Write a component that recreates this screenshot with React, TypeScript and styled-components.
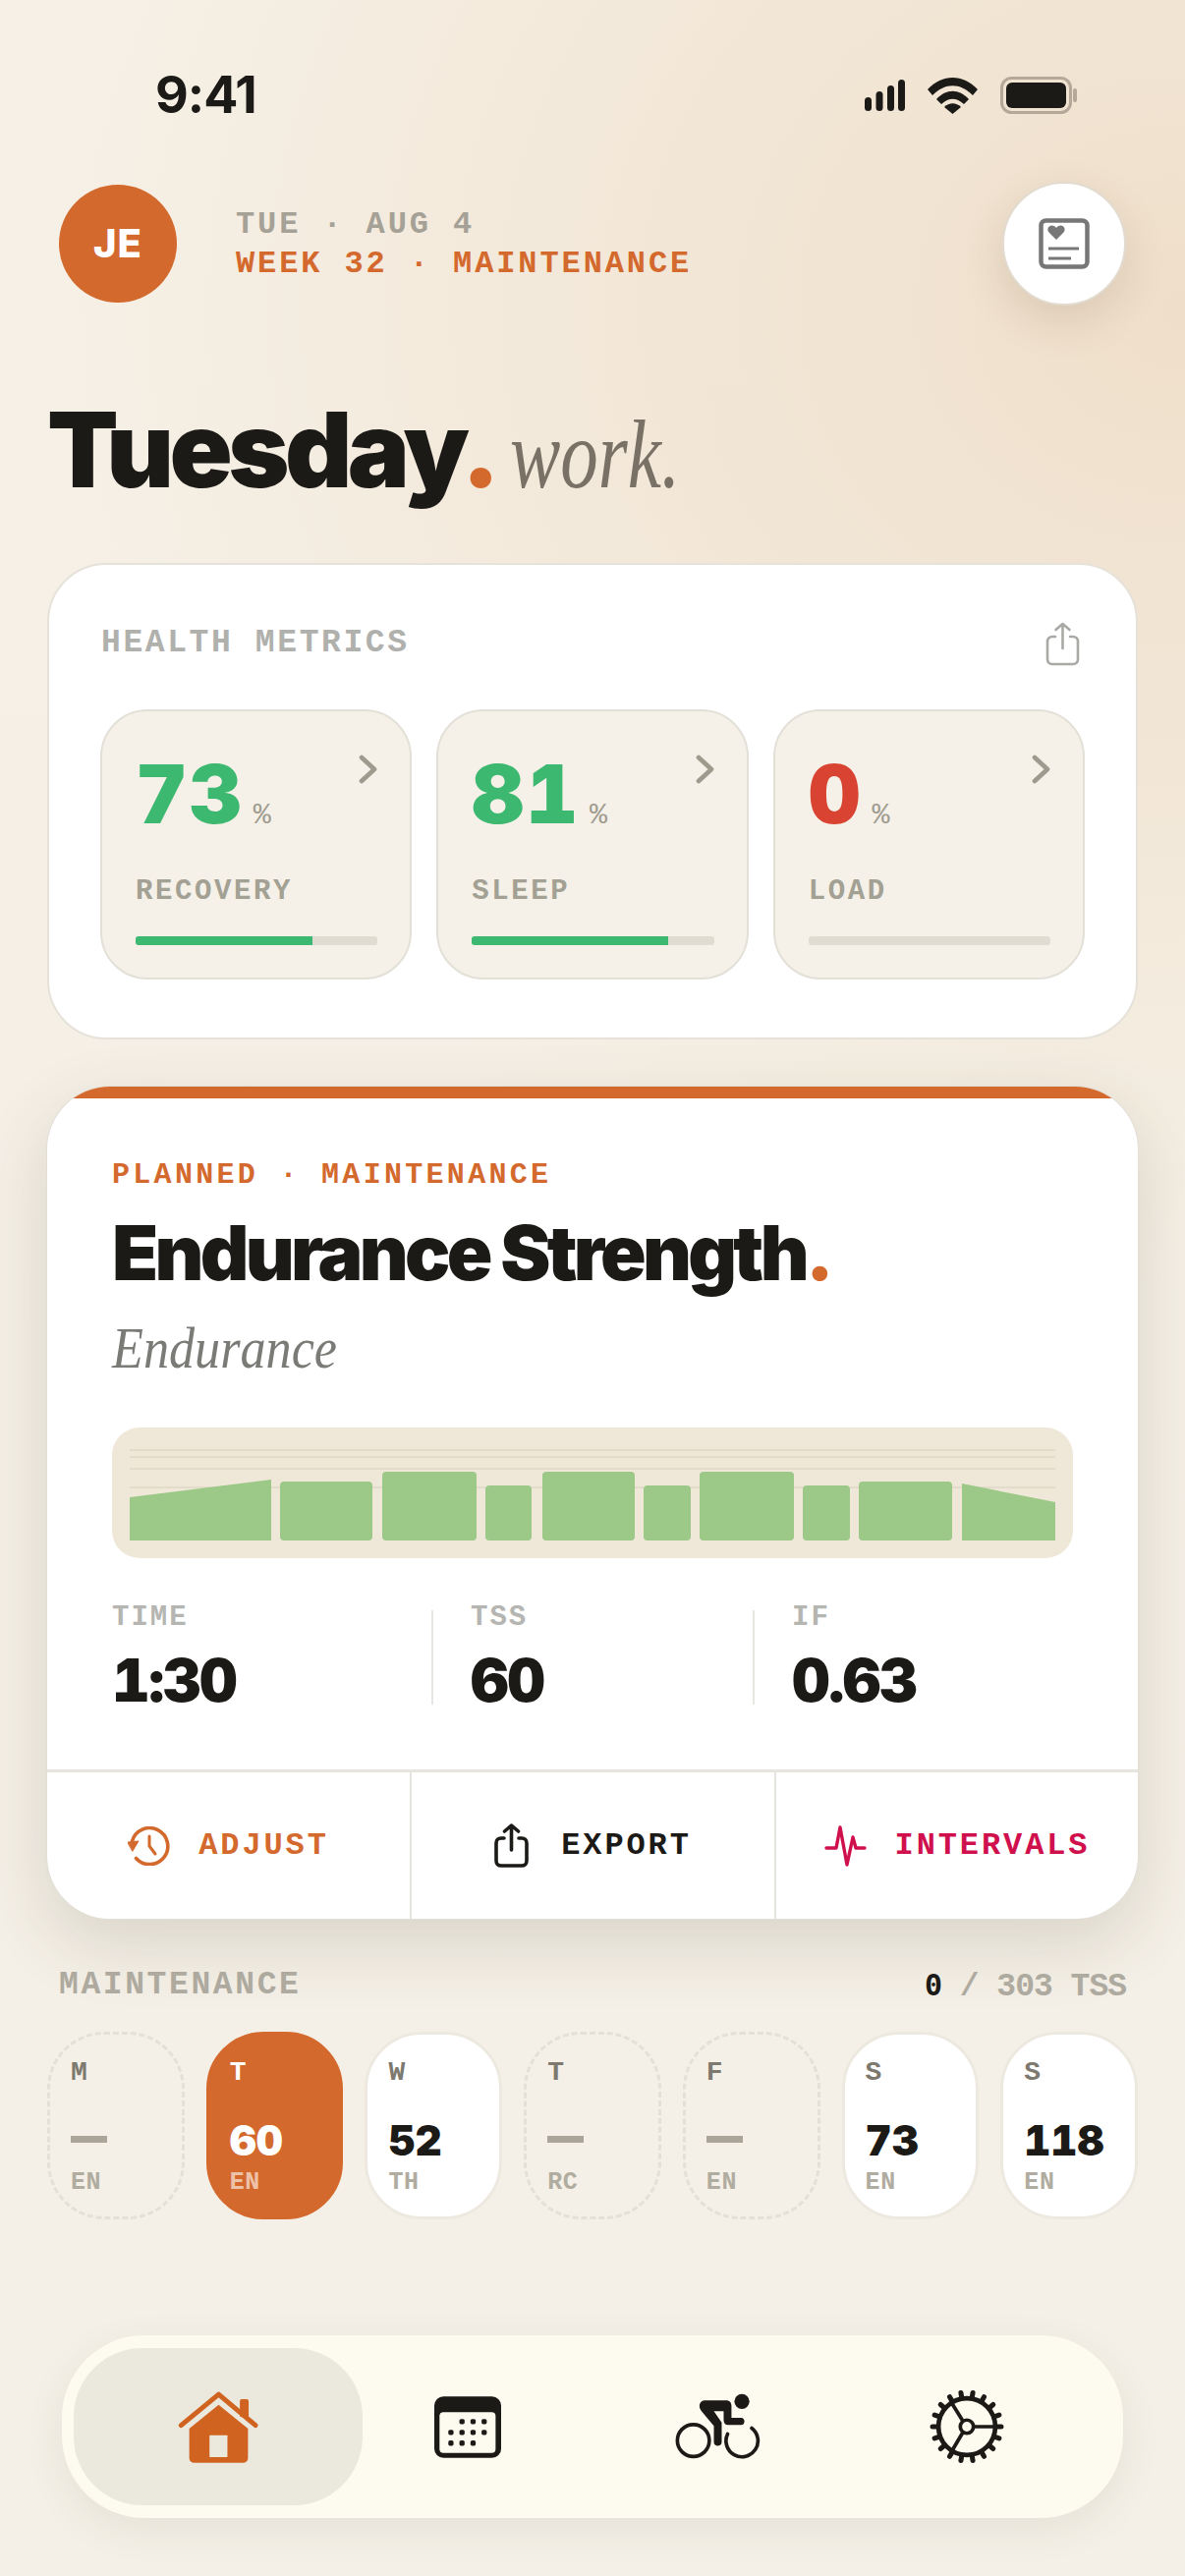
import styled, { createGlobalStyle } from "styled-components";

const ink = "#1c1a17";
const rust = "#d4692d";
const stone = "#a5a196";
const mono = `"Liberation Mono", monospace`;
const sans = `Inter, "Liberation Sans", sans-serif`;
const serif = `"Liberation Serif", serif`;

const Global = createGlobalStyle`
  html, body { margin: 0; padding: 0; }
  * { box-sizing: border-box; }
`;

const Shell = styled.div`
  width: 1206px;
  height: 2622px;
  overflow: hidden;
  background:
    radial-gradient(ellipse 1150px 1000px at 100% 12%, #efdfca 0%, rgba(239, 223, 202, 0) 100%),
    linear-gradient(180deg, #f6f0e6 0%, #f4f0e7 100%);
`;

const StatusBar = styled.div`
  height: 184px;
  padding: 68px 110px 0 158px;
  display: flex;
  justify-content: space-between;
  align-items: flex-start;
`;

const Clock = styled.div`
  font: 700 52px/58px ${sans};
  letter-spacing: -1px;
  color: ${ink};
`;

const StatusIcons = styled.div`
  display: flex;
  align-items: center;
  gap: 23px;
  height: 58px;
`;

const Header = styled.header`
  height: 127px;
  padding: 0 60px;
  display: flex;
  align-items: center;
`;

const Avatar = styled.div`
  width: 120px;
  height: 120px;
  border-radius: 50%;
  background: ${rust};
  color: #fff;
  display: flex;
  align-items: center;
  justify-content: center;
  font: 800 40px/1 ${sans};
  letter-spacing: 1px;
`;

const HeaderText = styled.div`
  margin-left: 60px;
  padding-top: 3px;
  flex: 1;
`;

const HeaderLine = styled.div<{ $accent?: boolean }>`
  font: 700 32px/40px ${mono};
  letter-spacing: 2.9px;
  white-space: pre;
  color: ${(p) => (p.$accent ? rust : stone)};
`;

const RoundButton = styled.div`
  width: 126px;
  height: 126px;
  border-radius: 50%;
  background: #fff;
  border: 2px solid #e2dbd0;
  box-shadow: 0 16px 44px rgba(90, 60, 30, 0.14);
  display: flex;
  align-items: center;
  justify-content: center;
`;

const Main = styled.main`
  padding: 0 48px;
`;

const Title = styled.h1`
  margin: 87px 0 55px;
  height: 120px;
  font: 900 106px/120px ${sans};
  letter-spacing: -4.6px;
  color: ${ink};
  white-space: nowrap;
`;

const Dot = styled.span`
  color: ${rust};
`;

const TitleNote = styled.em`
  display: inline-block;
  margin-left: 14px;
  font: italic 400 100px/120px ${serif};
  letter-spacing: 0;
  color: #7a7166;
  transform: scaleX(0.77);
  transform-origin: left center;
`;

const HealthCard = styled.section`
  height: 485px;
  background: #fff;
  border: 2px solid #e6e2da;
  border-radius: 60px;
  padding: 50px 52px 0 52px;
`;

const CardHead = styled.div`
  height: 60px;
  margin-bottom: 37px;
  display: flex;
  align-items: center;
  justify-content: space-between;
  padding-right: 5px;
`;

const CardHeading = styled.div`
  font: 700 33px/40px ${mono};
  letter-spacing: 2.6px;
  padding-left: 1px;
  color: #b0b0ad;
`;

const MetricGrid = styled.div`
  display: grid;
  grid-template-columns: repeat(3, 1fr);
  gap: 25px;
`;

const MetricTile = styled.div`
  height: 275px;
  background: #f5f1e8;
  border: 2px solid #e3e0d8;
  border-radius: 48px;
  padding: 44px 33px 0 34px;
`;

const MetricTop = styled.div`
  display: flex;
  justify-content: space-between;
  align-items: flex-start;
`;

const MetricValue = styled.div<{ $color: string }>`
  font: 900 82px/82px ${sans};
  font-variant-numeric: tabular-nums;
  letter-spacing: 2px;
  color: ${(p) => p.$color};
`;

const Percent = styled.span`
  margin-left: 10px;
  font: 400 30px/1 ${mono};
  letter-spacing: 0;
  color: #a09c90;
`;

const MetricLabel = styled.div`
  margin-top: 43px;
  font: 700 29px/30px ${mono};
  letter-spacing: 2.6px;
  color: #a3a094;
`;

const Track = styled.div`
  margin-top: 30px;
  height: 9px;
  border-radius: 3px;
  background: #e0dcd2;
  overflow: hidden;
`;

const TrackFill = styled.div`
  height: 100%;
  background: #3db870;
`;

const WorkoutCard = styled.section`
  margin-top: 48px;
  height: 847px;
  background: #fff;
  border-radius: 64px;
  overflow: hidden;
  box-shadow: 0 0 0 1px #e2dfd7, 0 24px 70px rgba(70, 60, 40, 0.16);
`;

const AccentBar = styled.div`
  height: 12px;
  background: ${rust};
`;

const WorkoutBody = styled.div`
  height: 683px;
  padding: 63px 66px 0;
`;

const Eyebrow = styled.div`
  font: 700 30px/30px ${mono};
  letter-spacing: 3.3px;
  white-space: pre;
  color: ${rust};
`;

const WorkoutTitle = styled.h2`
  margin: 26px 0 0;
  font: 900 77px/77px ${sans};
  letter-spacing: -3.75px;
  color: ${ink};
`;

const WorkoutType = styled.div`
  margin-top: 22px;
  font: italic 400 60px/72px ${serif};
  color: #7a7a76;
  transform: scaleX(0.87);
  transform-origin: left center;
`;

const Profile = styled.div`
  margin-top: 45px;
  height: 133px;
  border-radius: 28px;
  background: #efe8d8;
  padding: 22px 18px 18px;
`;

const Stats = styled.div`
  margin-top: 47px;
  display: flex;
  align-items: center;
`;

const Stat = styled.div<{ $width?: number; $inset?: boolean }>`
  width: ${(p) => (p.$width ? `${p.$width}px` : "auto")};
  padding-left: ${(p) => (p.$inset ? "38px" : "0")};
`;

const StatLabel = styled.div`
  font: 700 29px/28px ${mono};
  letter-spacing: 2px;
  color: #b5b5b2;
`;

const StatValue = styled.div`
  margin-top: 19px;
  font: 900 60px/60px ${sans};
  font-variant-numeric: tabular-nums;
  letter-spacing: -1.5px;
  color: ${ink};
`;

const StatDivider = styled.div`
  width: 2px;
  height: 96px;
  background: #e8e6e1;
`;

const Actions = styled.div`
  height: 152px;
  border-top: 3px solid #e8e5df;
  display: grid;
  grid-template-columns: 369px 371px 1fr;
`;

const Action = styled.div<{ $color: string; $gap: number; $divided?: boolean }>`
  display: flex;
  align-items: center;
  justify-content: center;
  gap: ${(p) => p.$gap}px;
  border-left: ${(p) => (p.$divided ? "2px solid #e6e4df" : "none")};
  font: 700 32px/1 ${mono};
  letter-spacing: 2.9px;
  color: ${(p) => p.$color};
`;

const WeekHead = styled.div`
  margin-top: 53px;
  height: 30px;
  padding: 0 12px;
  display: flex;
  justify-content: space-between;
  font: 700 33px/30px ${mono};
  color: #aeaa9f;
`;

const WeekTitle = styled.span`
  letter-spacing: 2.6px;
`;

const WeekTotal = styled.span`
  white-space: pre;
  letter-spacing: -1px;
`;

const WeekDone = styled.span`
  font-family: "DejaVu Sans Mono", monospace;
  font-weight: 700;
  font-size: 30px;
  color: ${ink};
`;

const WeekGrid = styled.div`
  margin-top: 32px;
  display: grid;
  grid-template-columns: repeat(7, 1fr);
  gap: 22px;
`;

const DayTile = styled.div<{ $kind: "rest" | "today" | "done" }>`
  height: 191px;
  padding: 27px 0 0 21px;
  border-radius: 58px;
  background: ${(p) => (p.$kind === "today" ? rust : p.$kind === "done" ? "#fff" : "transparent")};
  border: 3px ${(p) => (p.$kind === "rest" ? "dashed #e4e0d6" : p.$kind === "done" ? "solid #ede9e0" : `solid ${rust}`)};
`;

const DayLetter = styled.div<{ $today?: boolean }>`
  font: 700 28px/24px ${mono};
  color: ${(p) => (p.$today ? "#fff" : "#7d796f")};
`;

const DayValue = styled.div<{ $today?: boolean }>`
  margin-top: 36px;
  height: 42px;
  font: 900 42px/42px ${sans};
  font-variant-numeric: tabular-nums;
  letter-spacing: 0;
  color: ${(p) => (p.$today ? "#fff" : ink)};
  display: flex;
  align-items: center;
`;

const DayDash = styled.div`
  width: 37px;
  height: 7px;
  margin-top: -3px;
  background: #aaa598;
`;

const DayType = styled.div<{ $today?: boolean }>`
  margin-top: 10px;
  font: 700 25px/24px ${mono};
  letter-spacing: 0.6px;
  color: ${(p) => (p.$today ? "rgba(255,255,255,0.62)" : "#b0aca0")};
`;

const TabBar = styled.nav`
  margin: 118px 15px 0;
  height: 186px;
  border-radius: 84px;
  background: #fdfbef;
  box-shadow: 0 12px 40px rgba(70, 60, 40, 0.08);
  padding: 13px 12px;
  display: flex;
  align-items: center;
`;

const ActiveTab = styled.div`
  flex: none;
  width: 294px;
  height: 160px;
  border-radius: 70px;
  background: #ebe8dd;
  margin-right: 17px;
  display: flex;
  align-items: center;
  justify-content: center;
`;

const Tab = styled.div`
  flex: none;
  width: 180px;
  display: flex;
  align-items: center;
  justify-content: center;

  & + & {
    margin-left: 74px;
  }
`;

const Signal = () => (
  <svg width="41" height="32" viewBox="0 0 41 32" fill={ink}>
    <rect x="0" y="18" width="7" height="14" rx="3.5" />
    <rect x="11.5" y="12" width="7" height="20" rx="3.5" />
    <rect x="23" y="6" width="7" height="26" rx="3.5" />
    <rect x="34" y="0" width="7" height="32" rx="3.5" />
  </svg>
);

const Wifi = () => (
  <svg width="51" height="38" viewBox="0 0 51 38" fill={ink}>
    <path d="M0 13 C15 -3 36 -3 51 13 L46 19 C33 6 18 6 5 19 Z" />
    <path d="M9 23 C19 12 32 12 42 23 L37 28 C29 21 22 21 14 28 Z" />
    <path d="M17 31 C22 26 29 26 34 31 L25.5 38 Z" />
  </svg>
);

const Battery = () => (
  <svg width="78" height="38" viewBox="0 0 78 38">
    <rect x="1.5" y="1.5" width="70" height="35" rx="10" fill="none" stroke="#b5a899" strokeWidth="3" />
    <rect x="6" y="6" width="61" height="26" rx="6" fill={ink} />
    <rect x="74" y="12" width="4" height="14" rx="2" fill="#b5a899" />
  </svg>
);

const HealthRecord = () => (
  <svg width="52" height="52" viewBox="0 0 52 52" fill="none" stroke="#777" strokeWidth="4.5">
    <rect x="2.5" y="2.5" width="47" height="47" rx="5" />
    <path d="M10 31 H41 M10 41 H33" strokeWidth="3" />
    <path
      d="M18 22 L10.5 14.5 C8 11.5 10 7.5 13.5 7.5 C15.5 7.5 17 8.5 18 10 C19 8.5 20.5 7.5 22.5 7.5 C26 7.5 28 11.5 25.5 14.5 Z"
      fill="#777"
      stroke="none"
    />
  </svg>
);

const ShareIcon = ({ color, sw }: { color: string; sw: number }) => (
  <svg width="35" height="45" viewBox="0 0 35 45" fill="none" stroke={color} strokeWidth={sw} strokeLinecap="round" strokeLinejoin="round">
    <path d="M10 15 H7 C4 15 2 17 2 20 V38 C2 41 4 43 7 43 H28 C31 43 33 41 33 38 V20 C33 17 31 15 28 15 H25" />
    <path d="M17.5 27 V2 M10.5 8 L17.500 2 L24.500 8" />
  </svg>
);

const Chevron = () => (
  <svg width="19" height="30" viewBox="0 0 19 30" fill="none" stroke="#9e9a8e" strokeWidth="4.7" strokeLinecap="round" strokeLinejoin="round">
    <path d="M3 3 L16 15 L3 27" />
  </svg>
);

const HistoryIcon = () => (
  <svg width="44" height="40" viewBox="0 0 44 40" fill="none" stroke={rust} strokeWidth="3.6" strokeLinecap="round" strokeLinejoin="round">
    <path d="M4.5 15 A18.500 18.500 0 1 1 8.500 32.500" />
    <path d="M0 16 L11 15 L5 25 Z" fill={rust} strokeWidth="1" />
    <path d="M22 10 V20 L28 28" strokeWidth="3" />
  </svg>
);

const PulseIcon = () => (
  <svg width="43" height="44" viewBox="-2 -2 43 44" fill="none" stroke="#d0104c" strokeWidth="3.4" strokeLinecap="round" strokeLinejoin="round">
    <path d="M0 22 H10 L14 1 L21 39 L27 11 L30 22 H39" />
  </svg>
);

const WorkoutProfile = () => (
  <svg width="942" height="93" viewBox="0 0 942 93" style={{ display: "block" }}>
    <g fill="#e3dccb">
      <rect x="0" y="0" width="942" height="2" />
      <rect x="0" y="7" width="942" height="2" />
      <rect x="0" y="19" width="942" height="2" />
      <rect x="0" y="38" width="942" height="2" />
    </g>
    <g fill="#9cc888">
      <path d="M0 49 L144 31 V93 H0 Z" />
      <rect x="153" y="33" width="94" height="60" rx="4" />
      <rect x="257" y="23" width="96" height="70" rx="4" />
      <rect x="362" y="37" width="47" height="56" rx="4" />
      <rect x="420" y="23" width="94" height="70" rx="4" />
      <rect x="523" y="37" width="48" height="56" rx="4" />
      <rect x="580" y="23" width="96" height="70" rx="4" />
      <rect x="685" y="37" width="48" height="56" rx="4" />
      <rect x="742" y="33" width="95" height="60" rx="4" />
      <path d="M847 35 L942 54 V93 H847 Z" />
    </g>
  </svg>
);

const HomeIcon = () => (
  <svg width="83" height="75" viewBox="60 68 250 225">
    <path d="M70 175 L185 80 L298 175" fill="none" stroke="#d0631f" strokeWidth="15" strokeLinecap="round" strokeLinejoin="round" />
    <rect x="250" y="95" width="27" height="55" rx="6" fill="#d0631f" />
    <path d="M185 112 L275 185 V275 C275 284 269 290 260 290 H110 C101 290 95 284 95 275 V185 Z" fill="#d0631f" />
    <rect x="157" y="205" width="55" height="67" rx="2" fill="#ebe8dd" />
  </svg>
);

const calendarDots = [
  [932, 162], [966, 162], [1000, 162],
  [898, 195], [932, 195], [966, 195], [1000, 195],
  [898, 228], [932, 228], [966, 228],
];

const CalendarIcon = () => (
  <svg width="68" height="63" viewBox="847 85 205 188" fill={ink}>
    <rect x="847" y="85" width="205" height="188" rx="28" />
    <rect x="863" y="133" width="172" height="125" rx="12" fill="#fdfbef" />
    {calendarDots.map(([x, y]) => (
      <rect key={`${x}-${y}`} x={x - 8} y={y - 8} width="16" height="16" rx="5" />
    ))}
  </svg>
);

const BikeIcon = () => (
  <svg width="87" height="68" viewBox="80 75 260 205">
    <circle cx="284" cy="100" r="23" fill={ink} />
    <circle cx="135" cy="220" r="49" fill="none" stroke={ink} strokeWidth="11" />
    <path d="M314 182 A49 49 0 1 1 240 200" fill="none" stroke={ink} strokeWidth="11" strokeLinecap="round" />
    <path
      d="M170 97 H235 C248 97 252 105 252 115 V150 H282 C295 150 295 172 282 172 H240 C232 172 228 165 228 155 V130 H198 L222 165 V225 C222 240 198 240 198 225 V175 L160 130 C148 115 155 97 170 97 Z"
      fill={ink}
    />
  </svg>
);

const teeth = Array.from({ length: 18 }, (_, i) => 10 + i * 20);

const CrankIcon = () => (
  <svg width="76" height="76" viewBox="860 67 226 226" fill="none" stroke={ink}>
    {teeth.map((a) => (
      <line key={a} x1="973" y1="92" x2="973" y2="76" strokeWidth="15" strokeLinecap="round" transform={`rotate(${a} 973 180)`} />
    ))}
    <circle cx="973" cy="180" r="86" strokeWidth="14" />
    <circle cx="973" cy="180" r="20" strokeWidth="11" />
    <path d="M993 180 H1055 M961 163 L925 105 M961 197 L925 258" strokeWidth="11" />
  </svg>
);

const metrics = [
  { value: "73", label: "RECOVERY", pct: 73, color: "#3db870" },
  { value: "81", label: "SLEEP", pct: 81, color: "#3db870" },
  { value: "0", label: "LOAD", pct: 0, color: "#d94432" },
];

const days: { d: string; v?: string; t: string; kind: "rest" | "today" | "done" }[] = [
  { d: "M", t: "EN", kind: "rest" },
  { d: "T", v: "60", t: "EN", kind: "today" },
  { d: "W", v: "52", t: "TH", kind: "done" },
  { d: "T", t: "RC", kind: "rest" },
  { d: "F", t: "EN", kind: "rest" },
  { d: "S", v: "73", t: "EN", kind: "done" },
  { d: "S", v: "118", t: "EN", kind: "done" },
];

export default function App() {
  return (
    <Shell>
      <Global />
      <StatusBar>
        <Clock>9:41</Clock>
        <StatusIcons>
          <Signal />
          <Wifi />
          <Battery />
        </StatusIcons>
      </StatusBar>

      <Header>
        <Avatar>JE</Avatar>
        <HeaderText>
          <HeaderLine>TUE · AUG 4</HeaderLine>
          <HeaderLine $accent>WEEK 32 · MAINTENANCE</HeaderLine>
        </HeaderText>
        <RoundButton>
          <HealthRecord />
        </RoundButton>
      </Header>

      <Main>
        <Title>
          Tuesday<Dot>.</Dot>
          <TitleNote>work.</TitleNote>
        </Title>

        <HealthCard>
          <CardHead>
            <CardHeading>HEALTH METRICS</CardHeading>
            <ShareIcon color="#a9a9a6" sw={2.6} />
          </CardHead>
          <MetricGrid>
            {metrics.map((m) => (
              <MetricTile key={m.label}>
                <MetricTop>
                  <MetricValue $color={m.color}>
                    {m.value}
                    <Percent>%</Percent>
                  </MetricValue>
                  <Chevron />
                </MetricTop>
                <MetricLabel>{m.label}</MetricLabel>
                <Track>
                  <TrackFill style={{ width: `${m.pct}%` }} />
                </Track>
              </MetricTile>
            ))}
          </MetricGrid>
        </HealthCard>

        <WorkoutCard>
          <AccentBar />
          <WorkoutBody>
            <Eyebrow>PLANNED · MAINTENANCE</Eyebrow>
            <WorkoutTitle>
              Endurance Strength<Dot>.</Dot>
            </WorkoutTitle>
            <WorkoutType>Endurance</WorkoutType>
            <Profile>
              <WorkoutProfile />
            </Profile>
            <Stats>
              <Stat $width={325}>
                <StatLabel>TIME</StatLabel>
                <StatValue>1:30</StatValue>
              </Stat>
              <StatDivider />
              <Stat $width={325} $inset>
                <StatLabel>TSS</StatLabel>
                <StatValue>60</StatValue>
              </Stat>
              <StatDivider />
              <Stat $inset>
                <StatLabel>IF</StatLabel>
                <StatValue>0.63</StatValue>
              </Stat>
            </Stats>
          </WorkoutBody>
          <Actions>
            <Action $color={rust} $gap={28}>
              <HistoryIcon />
              ADJUST
            </Action>
            <Action $color={ink} $gap={33} $divided>
              <ShareIcon color={ink} sw={3.6} />
              EXPORT
            </Action>
            <Action $color="#d0104c" $gap={29} $divided>
              <PulseIcon />
              INTERVALS
            </Action>
          </Actions>
        </WorkoutCard>

        <WeekHead>
          <WeekTitle>MAINTENANCE</WeekTitle>
          <WeekTotal>
            <WeekDone>0</WeekDone> / 303 TSS
          </WeekTotal>
        </WeekHead>
        <WeekGrid>
          {days.map((day, i) => (
            <DayTile key={i} $kind={day.kind}>
              <DayLetter $today={day.kind === "today"}>{day.d}</DayLetter>
              <DayValue $today={day.kind === "today"}>{day.v ?? <DayDash />}</DayValue>
              <DayType $today={day.kind === "today"}>{day.t}</DayType>
            </DayTile>
          ))}
        </WeekGrid>

        <TabBar>
          <ActiveTab>
            <HomeIcon />
          </ActiveTab>
          <Tab>
            <CalendarIcon />
          </Tab>
          <Tab>
            <BikeIcon />
          </Tab>
          <Tab>
            <CrankIcon />
          </Tab>
        </TabBar>
      </Main>
    </Shell>
  );
}
